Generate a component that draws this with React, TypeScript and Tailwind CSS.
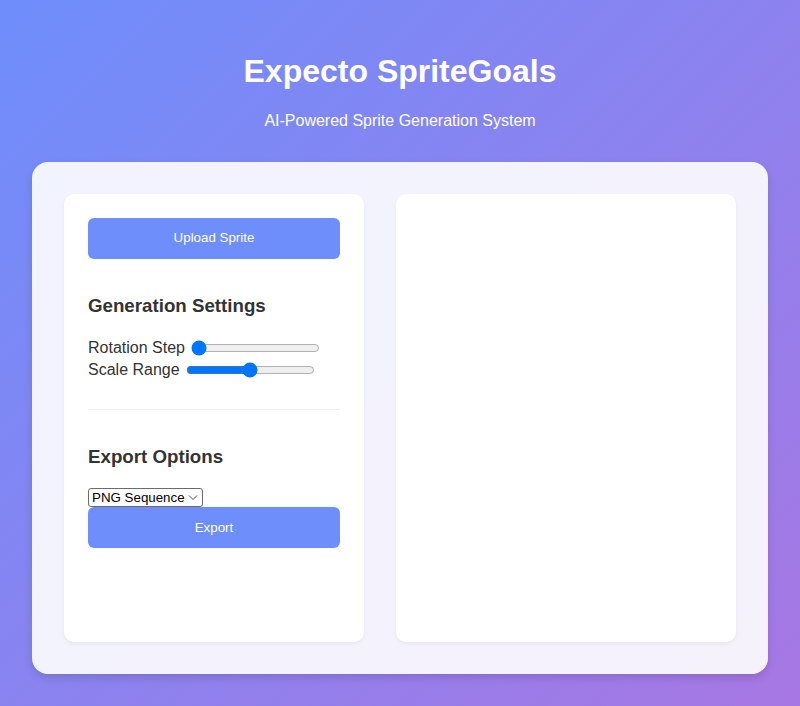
import { useState } from "react";

export default function App() {
  const [rotation, setRotation] = useState(0);
  const [scale, setScale] = useState(50);
  const [format, setFormat] = useState("png");

  return (
    <div className="min-h-screen p-8 bg-[linear-gradient(135deg,#6e8efb,#a777e3)] font-['Liberation_Sans',Arial,sans-serif] text-[#333]">
      {/* header */}
      <header className="text-center text-white mb-8">
        <h1 className="mt-[21.44px] mb-[21.44px] text-[32px] font-bold leading-[normal]">Expecto SpriteGoals</h1>
        <p className="text-base leading-[normal]">AI-Powered Sprite Generation System</p>
      </header>

      <div className="bg-white/90 rounded-2xl p-8 shadow-[0_4px_8px_rgba(0,0,0,0.12)]">
        <div className="grid grid-cols-[300px_1fr] gap-8">
          {/* controls */}
          <div className="bg-white rounded-[10px] p-6 h-[448px] shadow-[0_2px_4px_rgba(0,0,0,0.05)]">
            <button className="flex items-center justify-center w-full h-[41px] rounded-md bg-[#6e8efb] text-white text-[13.33px]">
              Upload Sprite
            </button>

            <h3 className="mt-[36px] mb-[20px] text-[18.72px] font-bold leading-[normal]">Generation Settings</h3>
            <div className="flex items-center gap-[6px] h-[22px] text-base">
              <span>Rotation Step</span>
              <input
                type="range"
                min={0}
                max={100}
                value={rotation}
                onChange={(e) => setRotation(Number(e.target.value))}
              />
            </div>
            <div className="flex items-center gap-[6px] h-[22px] text-base">
              <span>Scale Range</span>
              <input
                type="range"
                min={0}
                max={100}
                value={scale}
                onChange={(e) => setScale(Number(e.target.value))}
              />
            </div>

            <hr className="mt-[28px] border-0 border-t border-[#eee]" />

            <h3 className="mt-[36px] mb-[20.5px] text-[18.72px] font-bold leading-[normal]">Export Options</h3>
            <div className="relative w-[115px] h-[19px]">
              <select
                value={format}
                onChange={(e) => setFormat(e.target.value)}
                className="block appearance-none w-full h-full pl-[3px] text-[13.33px] leading-[17px] text-black bg-white border border-[#6b6b6b] rounded-[3px]"
              >
                <option value="png">PNG Sequence</option>
                <option value="gif">GIF</option>
                <option value="sheet">Sprite Sheet</option>
              </select>
              <svg
                className="absolute right-[5px] top-[6px] pointer-events-none"
                width="10"
                height="7"
                viewBox="0 0 10 7"
                fill="none"
              >
                <path d="M1 1.5L5 5.5L9 1.5" stroke="#555" strokeWidth="1" />
              </svg>
            </div>
            <button className="flex items-center justify-center w-full h-[41px] rounded-md bg-[#6e8efb] text-white text-[13.33px]">
              Export
            </button>
          </div>

          {/* preview */}
          <div className="bg-white rounded-[10px] shadow-[0_2px_4px_rgba(0,0,0,0.05)]" />
        </div>
      </div>
    </div>
  );
}
